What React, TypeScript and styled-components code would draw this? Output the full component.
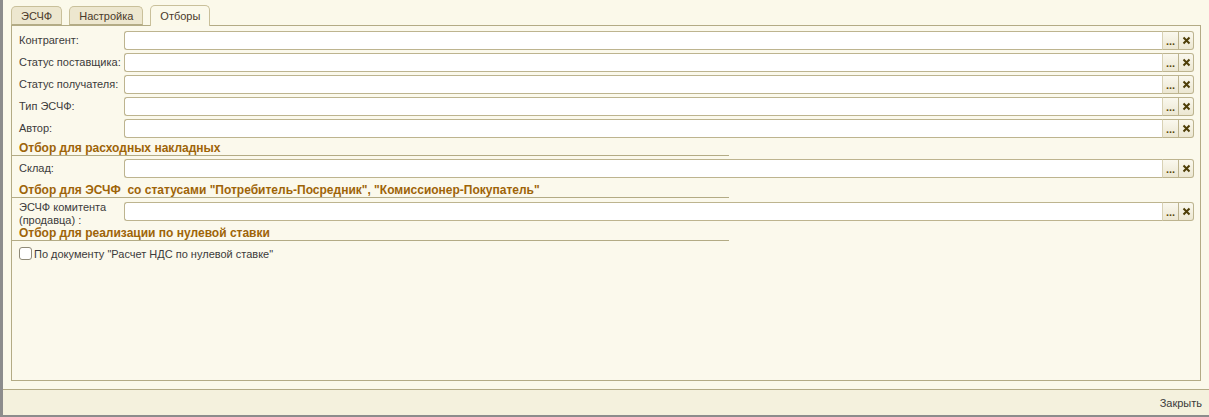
import React from 'react';
import styled, { createGlobalStyle } from 'styled-components';

const GlobalStyle = createGlobalStyle`
  html, body {
    margin: 0;
    padding: 0;
    background: #fbf9ea;
  }
  * {
    box-sizing: border-box;
  }
`;

const fields = [
  { label: 'Контрагент:' },
  { label: 'Статус поставщика:' },
  { label: 'Статус получателя:' },
  { label: 'Тип ЭСЧФ:' },
  { label: 'Автор:' },
];

const Window = styled.div`
  width: 1209px;
  height: 417px;
  display: flex;
  flex-direction: column;
  background: #fbf9ea;
  border-left: 3px solid #8c8c8c;
  border-bottom: 2px solid #8c8c8c;
  font-family: 'Liberation Sans', Arial, sans-serif;
  font-size: 11px;
  color: #3b3b3b;
`;

const Main = styled.div`
  flex: 1;
  display: flex;
  flex-direction: column;
  padding: 5px 8px 8px 8px;
`;

const Tabs = styled.div`
  display: flex;
  gap: 7px;
  height: 20px;
  align-items: flex-end;
  position: relative;
  z-index: 1;
`;

const Tab = styled.div<{ $active?: boolean }>`
  height: ${({ $active }) => ($active ? '21px' : '19px')};
  margin-bottom: ${({ $active }) => ($active ? '-1px' : '0')};
  padding: 0 ${({ $active }) => ($active ? '9px' : '9px')};
  display: flex;
  align-items: center;
  border: 1px solid #c9c09a;
  border-bottom: ${({ $active }) => ($active ? 'none' : '1px solid #b3ab85')};
  border-radius: 5px 5px 0 0;
  background: ${({ $active }) => ($active ? '#fbf9ea' : '#ede7cf')};
  color: #4a3a2a;
  font-size: 11px;
`;

const Panel = styled.div`
  flex: 1;
  border: 1px solid #b3ab85;
  background: #fbf9ec;
  padding: 5px 6px 0 7px;
  display: flex;
  flex-direction: column;
  gap: 3px;
`;

const Row = styled.div<{ $tall?: boolean }>`
  display: flex;
  align-items: ${({ $tall }) => ($tall ? 'flex-start' : 'center')};
  height: ${({ $tall }) => ($tall ? '22px' : '19px')};
  margin-top: ${({ $tall }) => ($tall ? '1px' : '0')};
`;

const Label = styled.div<{ $tall?: boolean }>`
  width: 105px;
  flex-shrink: 0;
  line-height: 13px;
  white-space: nowrap;
  margin-top: ${({ $tall }) => ($tall ? '-1px' : '0')};
`;

const Field = styled.div`
  flex: 1;
  display: flex;
  height: 19px;
`;

const Input = styled.div`
  flex: 1;
  background: #ffffff;
  border: 1px solid #bdb48f;
  border-right: none;
  border-radius: 3px 0 0 3px;
`;

const FieldButton = styled.div<{ $last?: boolean }>`
  width: ${({ $last }) => ($last ? '15px' : '17px')};
  display: flex;
  align-items: center;
  justify-content: center;
  border: 1px solid #bdb48f;
  border-left: ${({ $last }) => ($last ? 'none' : '1px solid #d8d1b4')};
  border-radius: ${({ $last }) => ($last ? '0 3px 3px 0' : '0')};
  background: linear-gradient(#faf8ee, #ece7d2);
  color: #5c4a0c;
  font-weight: bold;
  font-size: 11px;
`;

const SectionTitle = styled.div<{ $shift?: number }>`
  margin-left: -7px;
  margin-top: ${({ $shift }) => $shift ?? 0}px;
  padding-left: 7px;
  width: 717px;
  height: 14px;
  line-height: 12px;
  font-size: 12px;
  font-weight: bold;
  color: #9e6408;
  border-bottom: 1px solid #b3ab85;
`;

const CheckRow = styled.label`
  display: flex;
  align-items: center;
  gap: 2px;
  height: 19px;
`;

const CheckBox = styled.span`
  width: 13px;
  height: 13px;
  border: 1px solid #8f8a78;
  border-radius: 3px;
  background: #ffffff;
`;

const Footer = styled.div`
  height: 26px;
  border-top: 1px solid #b3ab85;
  background: #f4f1dd;
  display: flex;
  align-items: center;
  justify-content: flex-end;
  padding-right: 7px;
  color: #3b3b3b;
  font-size: 11px;
`;

const ClearIcon = () => (
  <svg width="9" height="9" viewBox="0 0 9 9">
    <path d="M1.5 1.5 L7.5 7.5 M7.5 1.5 L1.5 7.5" stroke="#4e3e08" strokeWidth="2" />
  </svg>
);

const InputField = () => (
  <Field>
    <Input />
    <FieldButton>...</FieldButton>
    <FieldButton $last>
      <ClearIcon />
    </FieldButton>
  </Field>
);

const App = () => (
  <>
    <GlobalStyle />
    <Window>
      <Main>
        <Tabs>
          <Tab>ЭСЧФ</Tab>
          <Tab>Настройка</Tab>
          <Tab $active>Отборы</Tab>
        </Tabs>
        <Panel>
          {fields.map((f) => (
            <Row key={f.label}>
              <Label>{f.label}</Label>
              <InputField />
            </Row>
          ))}
          <SectionTitle $shift={1}>Отбор для расходных накладных</SectionTitle>
          <Row>
            <Label>Склад:</Label>
            <InputField />
          </Row>
          <SectionTitle $shift={3}>
            Отбор для ЭСЧФ&nbsp; со статусами "Потребитель-Посредник", "Комиссионер-Покупатель"
          </SectionTitle>
          <Row $tall>
            <Label $tall>
              ЭСЧФ комитента
              <br />
              (продавца) :
            </Label>
            <InputField />
          </Row>
          <SectionTitle>Отбор для реализации по нулевой ставки</SectionTitle>
          <CheckRow>
            <CheckBox />
            По документу "Расчет НДС по нулевой ставке"
          </CheckRow>
        </Panel>
      </Main>
      <Footer>Закрыть</Footer>
    </Window>
  </>
);

export default App;
